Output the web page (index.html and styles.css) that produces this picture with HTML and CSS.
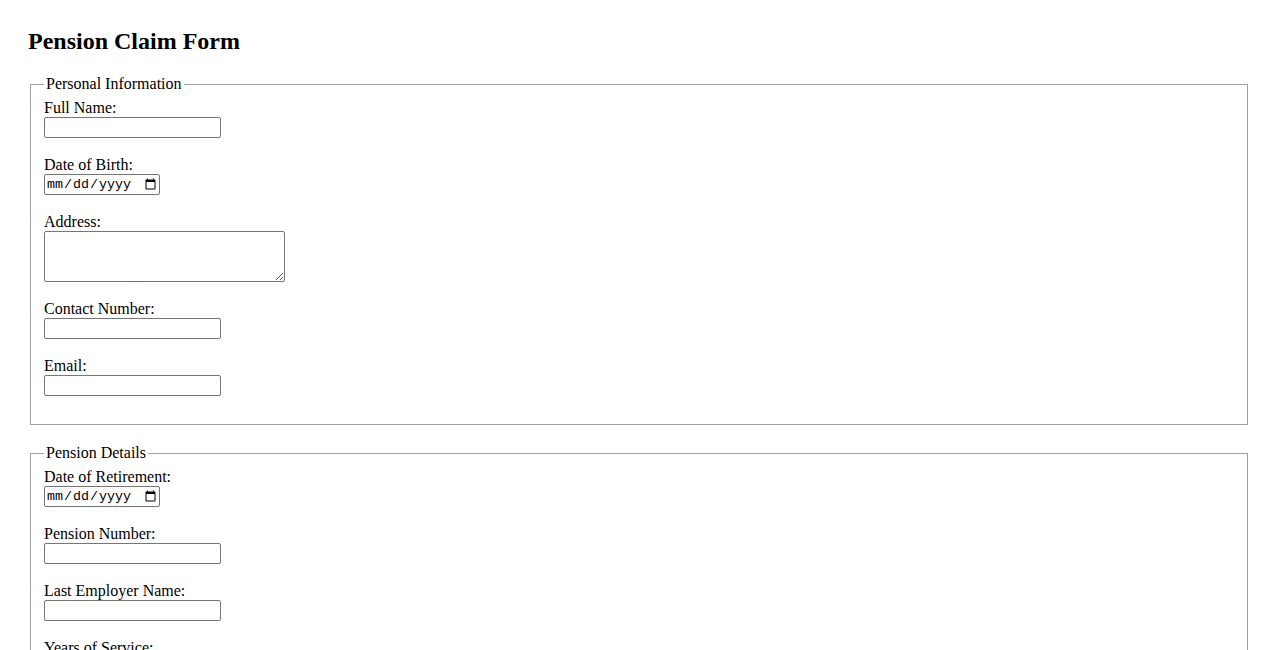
FILE: index.html
```html
<!DOCTYPE html>
<html lang="en">
<head>
  <meta charset="UTF-8" />
  <meta name="viewport" content="width=device-width, initial-scale=1.0"/>
  <title>Pension Claim Form</title>
  <link rel="stylesheet" href="styles.css">
</head>
<body>

  <h2>Pension Claim Form</h2>

  <form class="claim-form">
    <fieldset class="section">
      <legend>Personal Information</legend>
      <label for="fullName">Full Name:</label><br>
      <input type="text" id="fullName" name="fullName"><br><br>

      <label for="dob">Date of Birth:</label><br>
      <input type="date" id="dob" name="dob"><br><br>

      <label for="address">Address:</label><br>
      <textarea id="address" name="address" rows="3" cols="30"></textarea><br><br>

      <label for="phone">Contact Number:</label><br>
      <input type="text" id="phone" name="phone"><br><br>

      <label for="email">Email:</label><br>
      <input type="text" id="email" name="email"><br><br>
    </fieldset>

    <fieldset class="section">
      <legend>Pension Details</legend>
      <label for="retireDate">Date of Retirement:</label><br>
      <input type="date" id="retireDate" name="retireDate"><br><br>

      <label for="pensionNo">Pension Number:</label><br>
      <input type="text" id="pensionNo" name="pensionNo"><br><br>

      <label for="employer">Last Employer Name:</label><br>
      <input type="text" id="employer" name="employer"><br><br>

      <label for="years">Years of Service:</label><br>
      <input type="text" id="years" name="years"><br><br>
    </fieldset>

    <fieldset class="section">
      <legend>Bank Details</legend>
      <label for="bankName">Bank Name:</label><br>
      <input type="text" id="bankName" name="bankName"><br><br>

      <label for="account">Account Number:</label><br>
      <input type="text" id="account" name="account"><br><br>
    </fieldset>

    <button type="submit">Submit Claim</button>
  </form>

</body>
</html>
```

FILE: styles.css
```css
body {
  margin: 28px;
  font-family: "Liberation Serif", "Times New Roman", serif;
  font-size: 16px;
  color: #000;
  background: #fff;
}

h2 {
  font-size: 24px;
  margin: 0 0 20px;
}

/* fieldsets keep the plain grey browser look */
.section {
  margin: 0 2px 19px;
  border: 1px solid #a0a0a0;
  padding: 6px 13px 10px;
}

input[type="text"],
input[type="date"],
textarea {
  font-family: "Liberation Sans", Arial, sans-serif;
  font-size: 13.33px;
  border: 1px solid #767676;
  border-radius: 2px;
}

input[type="text"] {
  width: 177px;
  height: 21px;
  box-sizing: border-box;
}

input[type="date"] {
  font-family: "Liberation Mono", monospace;
  width: 116px;
  height: 21px;
  box-sizing: border-box;
}

textarea {
  width: 241px;
  height: 51px;
  box-sizing: border-box;
  vertical-align: top;
}
```
